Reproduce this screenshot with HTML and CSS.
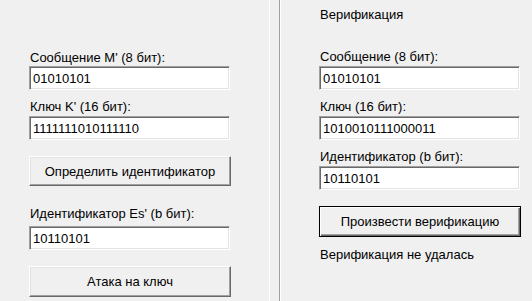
FILE: index.html
```html
<!DOCTYPE html>
<html lang="ru">
<head>
<meta charset="utf-8">
<title>Идентификация</title>
<link rel="stylesheet" href="styles.css">
</head>
<body>
<div class="window">
  <section class="panel panel-left">
    <div class="col">
      <label class="lbl l-first">Сообщение M' (8 бит):</label>
      <input class="field" type="text" value="01010101" readonly>
      <label class="lbl l-next">Ключ K' (16 бит):</label>
      <input class="field" type="text" value="1111111010111110" readonly>
      <button class="btn b-first" type="button">Определить идентификатор</button>
      <label class="lbl l-after-btn">Идентификатор Es' (b бит):</label>
      <input class="field f-after-btn" type="text" value="10110101" readonly>
      <button class="btn b-last" type="button">Атака на ключ</button>
    </div>
  </section>
  <section class="panel panel-right">
    <div class="col">
      <div class="title">Верификация</div>
      <label class="lbl l-first-r">Сообщение (8 бит):</label>
      <input class="field" type="text" value="01010101" readonly>
      <label class="lbl l-next">Ключ (16 бит):</label>
      <input class="field" type="text" value="1010010111000011" readonly>
      <label class="lbl l-next">Идентификатор (b бит):</label>
      <input class="field" type="text" value="10110101" readonly>
      <button class="btn btn-default b-verify" type="button">Произвести верификацию</button>
      <div class="status">Верификация не удалась</div>
    </div>
  </section>
</div>
</body>
</html>
```

FILE: styles.css
```css
* { box-sizing: border-box; }

html, body {
  margin: 0;
  padding: 0;
  background: #f0f0f0;
}

body {
  width: 532px;
  height: 301px;
  overflow: hidden;
  font-family: "Liberation Sans", Arial, sans-serif;
  font-size: 13px;
  color: #000;
}

.window {
  display: flex;
  height: 301px;
}

.panel {
  height: 100%;
}

.panel-left {
  width: 270px;
  border-right: 1px solid #ffffff;
  padding: 50px 0 0 29px;
}

.panel-right {
  flex: 1;
  margin-left: 9px;
  border-left: 1px solid #a0a0a0;
  box-shadow: inset 1px 0 #ffffff;
  padding: 7px 0 0 39px;
}

.col {
  display: flex;
  flex-direction: column;
  align-items: flex-start;
}

.lbl, .title, .status {
  display: block;
  height: 15px;
  line-height: 15px;
  padding-left: 1px;
  white-space: nowrap;
}

.l-first-r { margin-top: 27px; }
.l-next { margin-top: 9px; }
.l-after-btn { margin-top: 20px; }

.field {
  display: block;
  width: 201px;
  height: 24px;
  margin: 2px 0 0 0;
  padding: 0 0 0 3px;
  font: inherit;
  color: #000;
  background: #ffffff;
  border: 1px solid;
  border-color: #a0a0a0 #ffffff #ffffff #a0a0a0;
  box-shadow: inset 1px 1px #696969, inset -1px -1px #e3e3e3;
  outline: none;
  -webkit-appearance: none;
  appearance: none;
}
.l-first + .field { margin-top: 1px; }
.f-after-btn { margin-top: 5px; }

.btn {
  display: block;
  width: 202px;
  height: 30px;
  padding: 0;
  font: inherit;
  color: #000;
  background: #f0f0f0;
  border: 1px solid;
  border-color: #ffffff #696969 #696969 #ffffff;
  box-shadow: inset -1px -1px #a0a0a0, inset 1px 1px #e3e3e3;
  -webkit-appearance: none;
  appearance: none;
  text-align: center;
}

.b-first { margin-top: 16px; }
.b-last { margin-top: 16px; height: 31px; }

.btn-default {
  border: 1px solid #000;
  box-shadow: inset 1px 1px #ffffff, inset -1px -1px #696969, inset -2px -2px #a0a0a0;
}
.b-verify { margin-top: 16px; height: 31px; }

.status { margin-top: 10px; }
```
